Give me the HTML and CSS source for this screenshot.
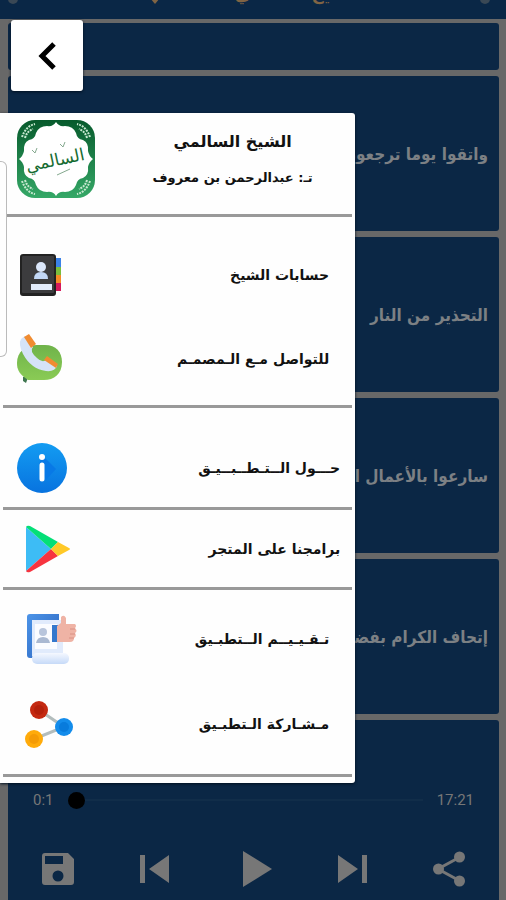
FILE: index.html
```html
<!DOCTYPE html>
<html lang="ar" dir="rtl">
<head>
    <meta charset="UTF-8">
    <meta name="viewport" content="width=device-width, initial-scale=1.0">
    <title>الشيخ السالمي</title>
    <link rel="stylesheet" href="styles.css">
</head>
<body>

    <header class="topbar">
        <svg class="dot" viewBox="0 0 10 10"><circle cx="5" cy="5" r="5"/></svg>
        <h1>الشيخ السالمي</h1>
        <svg class="pin" viewBox="0 0 10 14"><path d="M0 0H10V8L5 14L0 8Z"/></svg>
        <svg class="dot" viewBox="0 0 10 10"><circle cx="5" cy="5" r="5"/></svg>
    </header>

    <main class="list">
        <a class="card card-short" href="#" aria-label="درس"></a>
        <a class="card" href="#">واتقوا يوما ترجعون</a>
        <a class="card" href="#">التحذير من النار</a>
        <a class="card" href="#">سارعوا بالأعمال الصالحة</a>
        <a class="card" href="#">إتحاف الكرام بفضائل</a>

        <section class="player" dir="ltr">
            <div class="progress">
                <span>0:1</span>
                <input type="range" min="0" max="1041" value="1" aria-label="موضع التشغيل">
                <span>17:21</span>
            </div>
            <div class="controls">
                <button type="button" aria-label="حفظ">
                    <svg viewBox="0 0 32 32"><path fill-rule="evenodd" d="M3 0H26L32 6V29Q32 32 29 32H3Q0 32 0 29V3Q0 0 3 0ZM3 3V11H21V3ZM16 17.500A5.500 5.500 0 1 0 16 28.500A5.500 5.500 0 1 0 16 17.500Z"/></svg>
                </button>
                <button type="button" aria-label="السابق">
                    <svg viewBox="0 0 32 32"><path d="M0 2H5V30H0ZM29 2V30L9 16Z"/></svg>
                </button>
                <button type="button" aria-label="تشغيل">
                    <svg class="play" viewBox="0 0 32 36"><path d="M5 0L34 18L5 36Z"/></svg>
                </button>
                <button type="button" aria-label="التالي">
                    <svg viewBox="0 0 32 32"><path d="M3 2L23 16L3 30ZM27 2H32V30H27Z"/></svg>
                </button>
                <button type="button" aria-label="مشاركة">
                    <svg class="play" viewBox="0 0 32 36"><path d="M27 6L5 18L27 30" fill="none" stroke="currentColor" stroke-width="3"/><circle cx="26.500" cy="6" r="5.500"/><circle cx="5.500" cy="18" r="5.500"/><circle cx="26.500" cy="30" r="5.500"/></svg>
                </button>
            </div>
        </section>
    </main>

    <button class="back" type="button" aria-label="رجوع">
        <svg viewBox="0 0 18 28"><path d="M16 2L4 14L16 26" fill="none" stroke="#000" stroke-width="5"/></svg>
    </button>

    <nav class="menu">
        <div class="profile">
            <div class="names">
                <h2>الشيخ السالمي</h2>
                <p>تـ: عبدالرحمن بن معروف</p>
            </div>
            <svg class="logo" viewBox="0 0 78 78">
                <defs>
                    <linearGradient id="green" x1="0" y1="0" x2="0" y2="1">
                        <stop offset="0" stop-color="#075a2c"/>
                        <stop offset="1" stop-color="#35a867"/>
                    </linearGradient>
                </defs>
                <rect width="78" height="78" rx="18" fill="url(#green)"/>
                <path d="M39 2Q42 7 48 6Q56 6 59 13Q60 19 66 20Q72 23 71 31Q72 36 76 39Q72 42 71 47Q72 55 66 58Q60 59 59 65Q56 72 48 72Q42 71 39 76Q36 71 30 72Q22 72 19 65Q18 59 12 58Q6 55 7 47Q6 42 2 39Q6 36 7 31Q6 23 12 20Q18 19 19 13Q22 6 30 6Q36 7 39 2Z" fill="#fff"/>
                <g fill="none" stroke="#c6e8cf" stroke-width="2" stroke-dasharray="2 1">
                    <path d="M5 17Q9 6 18 4M8 18Q10 11 16 9"/>
                    <path d="M73 17Q69 6 60 4M70 18Q68 11 62 9"/>
                    <path d="M5 61Q9 72 18 74M8 60Q10 67 16 69"/>
                    <path d="M73 61Q69 72 60 74M70 60Q68 67 62 69"/>
                </g>
                <text x="38" y="46" text-anchor="middle" class="logo-text" transform="rotate(-12 38 40)">السالمي</text>
                <path d="M15 30L18 33L20 28M43 24L46 27L48 22M40 55L53 49" fill="none" stroke="#85a98f"/>
            </svg>
        </div>

        <ul class="group group-contact">
            <li><a href="#">
                <span>حسابات الشيخ</span>
                <svg viewBox="0 0 50 50">
                    <path d="M38 8H44V17H38Z" fill="#3b82e8"/><path d="M38 17H44V25H38Z" fill="#79bd3d"/><path d="M38 25H44V33H38Z" fill="#f58a27"/><path d="M38 33H44V41H38Z" fill="#d6195b"/>
                    <rect x="3" y="4" width="36" height="42" rx="3" fill="#222"/>
                    <rect x="5" y="6" width="32" height="37" rx="1" fill="#3c3c3e"/>
                    <circle cx="24" cy="17" r="5" fill="#dce8fb"/><path d="M17 29Q17 22 24 22Q31 22 31 29Z" fill="#c3d8f7"/>
                    <rect x="14" y="34" width="21" height="6" fill="#e2ebfa"/>
                </svg>
            </a></li>
            <li><a href="#">
                <span>للتواصل مـع الـمصمـم</span>
                <svg viewBox="0 0 50 50">
                    <defs><linearGradient id="leaf" x1="0" y1="0" x2="0" y2="1"><stop offset="0" stop-color="#6fb34a"/><stop offset="1" stop-color="#8acb55"/></linearGradient></defs>
                    <path d="M6 43L12 41L9 49L6 47Z" fill="#3f7650"/>
                    <path d="M20 11H28C39 11 45 18 45 28C45 40 37 46 27 46H11L7 43C2 39 0 35 0 29C0 18 8 11 20 11Z" fill="url(#leaf)"/>
                    <path d="M4 5L8 2L16 13Q12 17 20 24Q26 30 30 25L40 32Q38 38 29 37Q14 35 6 20Q1 10 4 5Z" fill="#d5e3f7"/>
                    <path d="M7 3L12 0L19 10L14 14Z" fill="#f08c31"/><path d="M30 22L41 30L39 34L27 26Z" fill="#f08c31"/>
                </svg>
            </a></li>
        </ul>

        <ul class="group group-about">
            <li><a href="#">
                <span>حـــول الــتـطــبــيـق</span>
                <svg viewBox="0 0 50 50">
                    <defs><linearGradient id="sky" x1="0" y1="0" x2="0" y2="1"><stop offset="0" stop-color="#139cf2"/><stop offset="1" stop-color="#0873df"/></linearGradient></defs>
                    <circle cx="25" cy="25" r="25" fill="url(#sky)"/>
                    <path d="M25 12L39 26L29 37L22 22Z" fill="#0879e6"/>
                    <circle cx="25" cy="14" r="3" fill="#fff"/><path d="M25 22V36" stroke="#fff" stroke-width="5" stroke-linecap="round"/>
                </svg>
            </a></li>
        </ul>

        <ul class="group group-store">
            <li><a href="#">
                <span>برامجنا على المتجر</span>
                <svg viewBox="0 0 50 50">
                    <path d="M3 3V47L28 25Z" fill="#3dbcf5"/>
                    <path d="M3 3Q4 1 7 2L35 18L28 25Z" fill="#04df77"/>
                    <path d="M3 47Q4 49 7 48L35 32L28 25Z" fill="#f7343f"/>
                    <path d="M35 18L46 24Q48 25 46 26L35 32L28 25Z" fill="#ffc928"/>
                </svg>
            </a></li>
        </ul>

        <ul class="group group-share">
            <li><a href="#">
                <span>تـقـيـيــم الــتطبـيق</span>
                <svg viewBox="0 0 50 50">
                    <defs>
                        <linearGradient id="cover" x1="0" y1="0" x2="1" y2="1"><stop offset="0" stop-color="#4c94e8"/><stop offset="1" stop-color="#2c64bd"/></linearGradient>
                        <linearGradient id="paper" x1="0" y1="0" x2="0" y2="1"><stop offset="0" stop-color="#f5f8ff"/><stop offset="1" stop-color="#c6daf8"/></linearGradient>
                    </defs>
                    <g transform="translate(2 0)">
                        <path d="M0 3Q0 0 3 0H32V10H6V44H3Q0 44 0 41Z" fill="url(#cover)"/>
                        <path d="M5 6H36V42H5Z" fill="#e1ebfc"/><path d="M8 10H30V35H8Z" fill="#fbfcff"/>
                        <circle cx="16" cy="18" r="4" fill="#b8c5dc"/><path d="M9 29Q10 23 16 23Q22 23 23 29Z" fill="#aab9d2"/>
                        <rect x="5" y="39" width="37" height="11" rx="5" fill="url(#paper)"/>
                        <path d="M25 11H31V28H25Z" fill="#3478cd"/>
                        <path d="M30 12L34 9V3Q37 0 39 4V10H48Q50 12 48 14Q51 17 48 19Q50 22 47 24Q47 28 43 28H30Z" fill="#efb3a5"/>
                        <path d="M43 15H48M43 20H48M42 24H47" stroke="#d99084"/>
                    </g>
                </svg>
            </a></li>
            <li><a href="#">
                <span>مـشـاركة الـتطبـيق</span>
                <svg viewBox="0 0 50 50">
                    <path d="M14 11L39 28L9 40" fill="none" stroke="#b3bdbd" stroke-width="3"/>
                    <circle cx="14" cy="11" r="9" fill="#c42911"/><circle cx="14" cy="11" r="5" fill="#b4200b"/>
                    <circle cx="39" cy="28" r="9" fill="#138ceb"/><circle cx="39" cy="28" r="5" fill="#087bdc"/>
                    <circle cx="9" cy="40" r="9" fill="#ffab0b"/><circle cx="9" cy="40" r="5" fill="#f49b06"/>
                </svg>
            </a></li>
        </ul>
    </nav>

    <div class="edge-handle"></div>

</body>
</html>
```
FILE: styles.css
```css
* {
    box-sizing: border-box;
}
body {
    margin: 0;
    min-height: 100vh;
    display: flex;
    flex-direction: column;
    position: relative;
    background-color: #686868;
    font-family: "DejaVu Sans", sans-serif;
}
h1, h2, p, ul {
    margin: 0;
    padding: 0;
}
a {
    color: inherit;
    text-decoration: none;
}
button {
    padding: 0;
    border: none;
    background: none;
    cursor: pointer;
}
svg {
    display: block;
    overflow: visible;
}
/* Barra superior */
.topbar {
    height: 19px;
    display: flex;
    align-items: flex-end;
    justify-content: space-between;
    padding: 0 16px 15px 8px;
    overflow: hidden;
    background-color: #0a2746;
    color: #806444;
}
.topbar h1 {
    margin-right: 110px;
    font-size: 17px;
    line-height: 20px;
    white-space: nowrap;
}
.topbar svg {
    flex: none;
    fill: currentColor;
}
.topbar .dot {
    width: 10px;
    height: 10px;
    color: #3a4855;
}
.topbar .pin {
    width: 10px;
    height: 14px;
    margin: 0 65px 0 122px;
}
/* Lista de lecciones */
.list {
    flex: 1;
    display: flex;
    flex-direction: column;
    gap: 6px;
    padding: 4px 7px 0 8px;
}
.card {
    height: 155px;
    display: flex;
    align-items: center;
    padding: 0 11px;
    overflow: hidden;
    white-space: nowrap;
    background-color: #0b2745;
    border-radius: 3px;
    color: #7c8084;
    font-family: "DejaVu Sans Condensed", "DejaVu Sans", sans-serif;
    font-size: 17px;
    font-weight: bold;
}
.card-short {
    height: 47px;
}
/* Reproductor */
.player {
    flex: 1;
    padding: 68px 34px 12px;
    background-color: #0b2745;
    border-radius: 3px 3px 0 0;
    color: #777777;
}
.progress {
    display: flex;
    align-items: center;
    gap: 14px;
    margin: 0 -9px;
    font-family: Roboto, sans-serif;
    font-size: 15px;
    line-height: 24px;
}
.progress input {
    flex: 1;
    min-width: 0;
    height: 18px;
    margin: 0;
    appearance: none;
    background: linear-gradient(#112d49, #112d49) center / 100% 2px no-repeat;
}
.progress input::-webkit-slider-thumb {
    appearance: none;
    width: 17px;
    height: 17px;
    border-radius: 50%;
    background-color: #000;
}
.controls {
    display: flex;
    align-items: center;
    justify-content: space-between;
    margin-top: 39px;
}
.controls button {
    color: #777777;
}
.controls svg {
    width: 32px;
    height: 32px;
    fill: currentColor;
}
.controls .play {
    height: 36px;
}
/* Botón de volver */
.back {
    position: absolute;
    top: 20px;
    left: 11px;
    width: 72px;
    height: 71px;
    display: flex;
    align-items: center;
    justify-content: center;
    background-color: #fff;
    border-radius: 3px;
    box-shadow: 0 1px 3px #001020;
}
.back svg {
    width: 18px;
    height: 28px;
}
/* Menú lateral */
.menu {
    position: absolute;
    top: 113px;
    left: 0;
    width: 70.2%;
    padding: 0 3px 6px;
    background-color: #fefefe;
    border-radius: 0 3px 3px 0;
    box-shadow: 0 1px 3px #001020;
    color: #111;
}
.profile {
    height: 104px;
    display: flex;
    justify-content: space-between;
    padding: 7px 0 0 14px;
    border-bottom: 3px solid #999;
}
.names {
    flex: 1;
    padding-left: 18px;
    text-align: center;
}
.names h2 {
    font-size: 16px;
    line-height: 44px;
}
.names p {
    font-size: 13px;
    font-weight: bold;
    line-height: 28px;
}
.logo {
    width: 78px;
    height: 78px;
}
.logo-text {
    font-size: 17px;
    fill: #176c32;
}
.group {
    list-style: none;
    border-bottom: 3px solid #999;
}
.group a {
    display: flex;
    align-items: center;
    justify-content: space-between;
    font-size: 14px;
    font-weight: bold;
    white-space: nowrap;
}
.group svg {
    width: 50px;
    height: 50px;
}
.group-contact {
    padding: 16px 23px 4px 14px;
}
.group-contact a {
    height: 84px;
}
.group-about {
    padding: 20px 12px 0 14px;
}
.group-about a {
    height: 79px;
}
.group-store {
    padding: 0 12px 0 20px;
}
.group-store a {
    height: 77px;
}
.group-share {
    padding: 6px 23px 8px 22px;
}
.group-share a {
    height: 85px;
}
/* Pestaña en el borde de la pantalla */
.edge-handle {
    position: absolute;
    top: 161px;
    left: 0;
    width: 7px;
    height: 196px;
    background-color: #fefefe;
    border: 1px solid #bbb;
    border-left: none;
    border-radius: 0 6px 6px 0;
}
```
